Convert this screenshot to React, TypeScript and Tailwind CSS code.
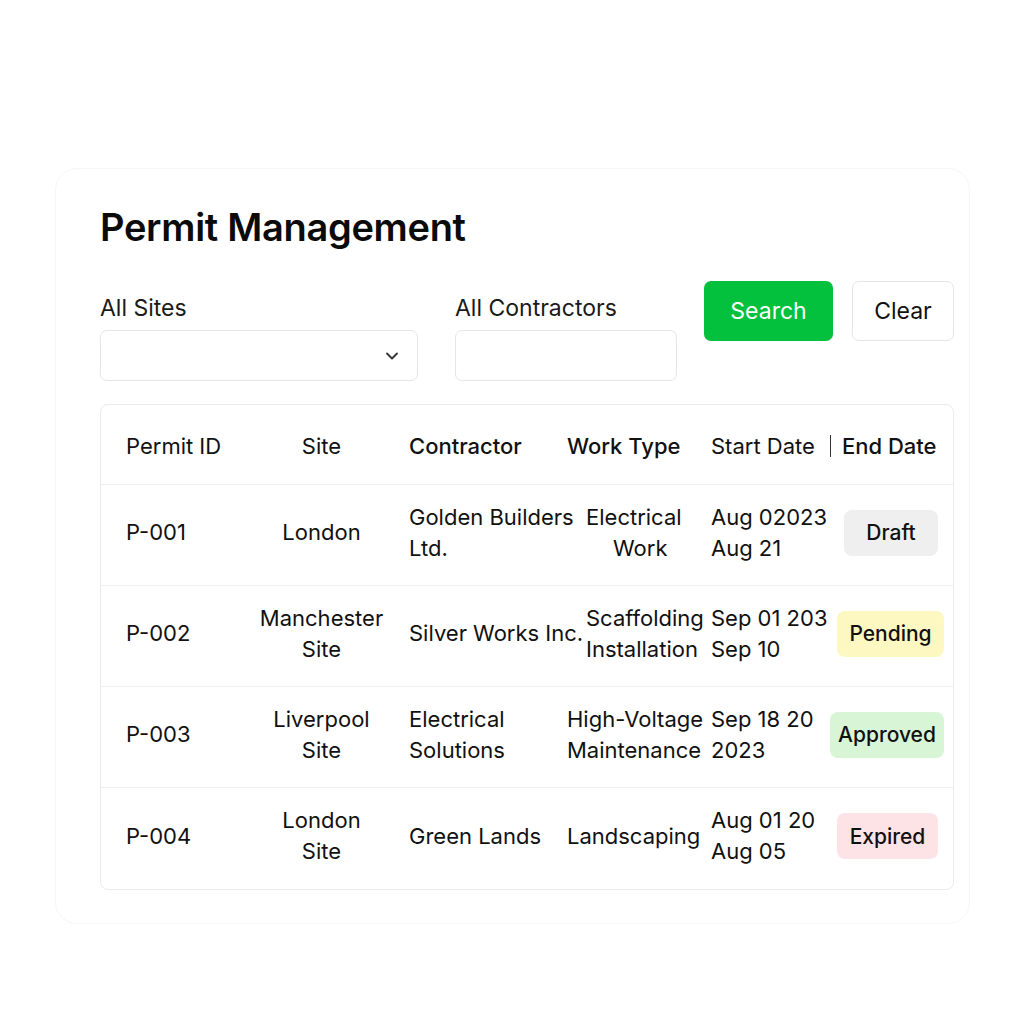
import React from "react";

const rows = [
  {
    id: "P-001",
    site: ["London"],
    contractor: ["Golden Builders", "Ltd."],
    work: ["Electrical", "Work"],
    workPad: true,
    workCenter: true,
    dates: ["Aug 02023", "Aug 21"],
    status: "Draft",
    badge: "bg-[#efefef] w-[94px] ml-[14px]",
  },
  {
    id: "P-002",
    site: ["Manchester", "Site"],
    contractor: ["Silver Works Inc."],
    work: ["Scaffolding", "Installation"],
    workPad: true,
    workCenter: false,
    dates: ["Sep 01 203", "Sep 10"],
    status: "Pending",
    badge: "bg-[#fdf8c2] w-[107px] ml-[7px]",
  },
  {
    id: "P-003",
    site: ["Liverpool", "Site"],
    contractor: ["Electrical", "Solutions"],
    work: ["High-Voltage", "Maintenance"],
    workPad: false,
    workCenter: false,
    dates: ["Sep 18 20", "2023"],
    status: "Approved",
    badge: "bg-[#d8f6d6] w-[114px] ml-0",
  },
  {
    id: "P-004",
    site: ["London", "Site"],
    contractor: ["Green Lands"],
    work: ["Landscaping"],
    workPad: false,
    workCenter: false,
    dates: ["Aug 01 20", "Aug 05"],
    status: "Expired",
    badge: "bg-[#fde3e6] w-[101px] ml-[7px]",
  },
];

const grid = "grid grid-cols-[145px_151px_170px_144px_119px_1fr] items-center";

export default function App() {
  return (
    <div
      className="min-h-[1024px] w-[1024px] bg-white pt-[168px] pl-[55px] text-[#111]"
      style={{ fontFamily: "Inter, 'Noto Sans', sans-serif" }}
    >
      <div className="w-[915px] rounded-[22px] border border-[#f6f6f6] pl-[44px] pr-[15px] pt-[36px] pb-[33px]">
        <h1 className="text-[38px] font-semibold leading-[44px] tracking-[-0.3px] text-[#0b0b0b]">
          Permit Management
        </h1>

        <div className="mt-[32px] flex items-start">
          <div className="w-[318px] shrink-0">
            <div className="mt-[13px] text-[23px] leading-[28px] text-[#1a1a1a]">All Sites</div>
            <div className="mt-[8px] flex h-[51px] items-center justify-end rounded-[7px] border border-[#e6e6e6] pr-[15px]">
              <svg width="20" height="20" viewBox="0 0 24 24" fill="none" stroke="#333" strokeWidth="2.2" strokeLinecap="round" strokeLinejoin="round">
                <path d="M6 9l6 6 6-6" />
              </svg>
            </div>
          </div>
          <div className="ml-[37px] w-[222px] shrink-0">
            <div className="mt-[13px] whitespace-nowrap text-[23px] leading-[28px] text-[#1a1a1a]">All Contractors</div>
            <div className="mt-[8px] h-[51px] rounded-[7px] border border-[#e6e6e6]" />
          </div>
          <button className="ml-[27px] flex h-[60px] w-[129px] shrink-0 items-center justify-center rounded-[7px] bg-[#03c13c] text-[23px] text-white">
            Search
          </button>
          <button className="ml-[19px] flex h-[60px] w-[102px] shrink-0 items-center justify-center rounded-[7px] border border-[#e6e6e6] bg-white text-[23px] text-[#111]">
            Clear
          </button>
        </div>

        <div className="mt-[23px] w-[854px] rounded-[8px] border border-[#ebebeb] text-[22px] leading-[31px]">
          <div className={`${grid} h-[80px] border-b border-[#efefef] pt-[3px]`}>
            <div className="pl-[25px]">Permit ID</div>
            <div className="text-center">Site</div>
            <div className="pl-[12px] font-medium">Contractor</div>
            <div className="font-medium">Work Type</div>
            <div className="whitespace-nowrap">Start Date</div>
            <div className="flex items-center whitespace-nowrap">
              <span className="mr-[11px] h-[22px] w-px bg-[#333]" />
              <span className="font-medium">End Date</span>
            </div>
          </div>
          {rows.map((r, i) => (
            <div
              key={r.id}
              className={`${grid} h-[101px] ${i < rows.length - 1 ? "border-b border-[#efefef]" : ""}`}
            >
              <div className="pl-[25px] pb-[5px]">{r.id}</div>
              <div className="text-center whitespace-nowrap pb-[5px]">
                {r.site.map((s) => (
                  <div key={s}>{s}</div>
                ))}
              </div>
              <div className="pl-[12px] whitespace-nowrap pb-[5px]">
                {r.contractor.map((s) => (
                  <div key={s}>{s}</div>
                ))}
              </div>
              <div className={`whitespace-nowrap pb-[5px] ${r.workPad ? "pl-[19px]" : ""}`}>
                {r.work.map((s, j) => (
                  <div key={s} className={r.workCenter && j === 1 ? "pl-[27px]" : ""}>
                    {s}
                  </div>
                ))}
              </div>
              <div className="whitespace-nowrap pb-[5px]">
                {r.dates.map((s) => (
                  <div key={s}>{s}</div>
                ))}
              </div>
              <div className="flex justify-start pb-[5px]">
                <span
                  className={`flex h-[46px] items-center justify-center rounded-[8px] text-[21px] font-medium ${r.badge}`}
                >
                  {r.status}
                </span>
              </div>
            </div>
          ))}
        </div>
      </div>
    </div>
  );
}
